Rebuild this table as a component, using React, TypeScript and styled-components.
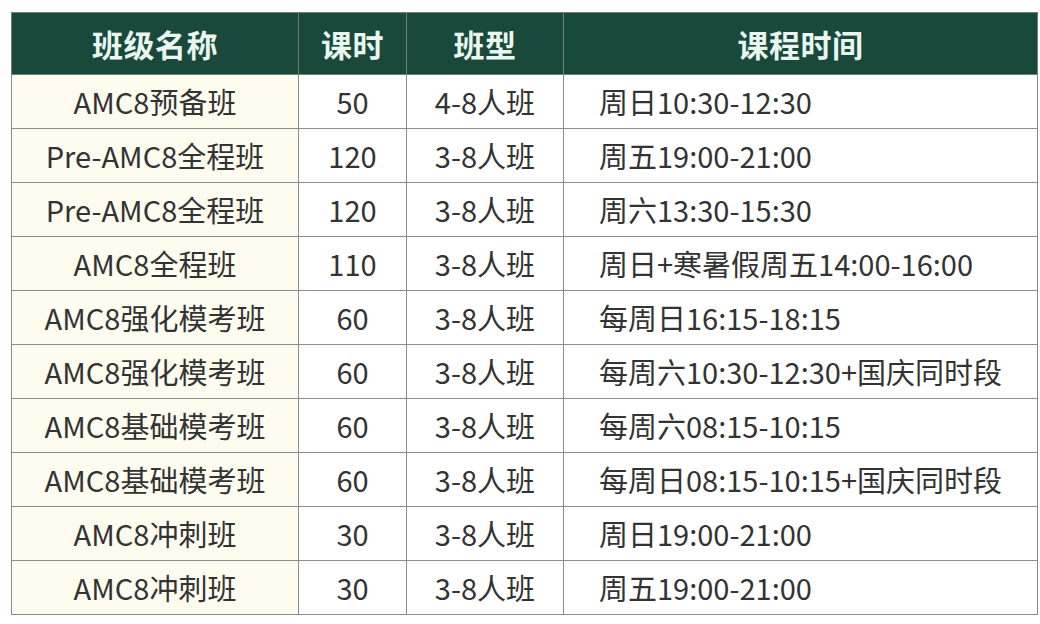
import styled, { createGlobalStyle } from 'styled-components'
import { FC } from 'react'

const GlobalStyle = createGlobalStyle`
  html, body {
    margin: 0;
    padding: 0;
    background: #ffffff;
  }
  body {
    font-family: "Noto Sans CJK SC", "Noto Sans", sans-serif;
  }
`

const Page = styled.div`
  padding: 12px 3px 0 11px;
`

const Table = styled.table`
  width: 1026px;
  border-collapse: collapse;
  table-layout: fixed;
  border: 1px solid #8c8c8c;
`

const HeadRow = styled.tr`
  height: 62px;
  background: #18493b;
`

const HeadCell = styled.th<{ $width: number }>`
  width: ${(p) => p.$width}px;
  padding: 0;
  border: 1px solid #6f8079;
  color: #eaf7f1;
  font-size: 31px;
  font-weight: 700;
  text-align: center;
  letter-spacing: 0.5px;
`

const Row = styled.tr`
  height: 54px;
`

const Cell = styled.td<{ $align?: 'left' | 'center'; $cream?: boolean }>`
  padding: ${(p) => (p.$align === 'left' ? '0 0 0 35px' : '0')};
  border: 1px solid #8c8c8c;
  background: ${(p) => (p.$cream ? '#fdfcef' : '#ffffff')};
  color: #333333;
  font-size: 29px;
  text-align: ${(p) => p.$align ?? 'center'};
  white-space: nowrap;
  line-height: 1;
`

type Course = {
  name: string
  hours: number
  size: string
  time: string
}

const courses: Course[] = [
  { name: 'AMC8预备班', hours: 50, size: '4-8人班', time: '周日10:30-12:30' },
  { name: 'Pre-AMC8全程班', hours: 120, size: '3-8人班', time: '周五19:00-21:00' },
  { name: 'Pre-AMC8全程班', hours: 120, size: '3-8人班', time: '周六13:30-15:30' },
  { name: 'AMC8全程班', hours: 110, size: '3-8人班', time: '周日+寒暑假周五14:00-16:00' },
  { name: 'AMC8强化模考班', hours: 60, size: '3-8人班', time: '每周日16:15-18:15' },
  { name: 'AMC8强化模考班', hours: 60, size: '3-8人班', time: '每周六10:30-12:30+国庆同时段' },
  { name: 'AMC8基础模考班', hours: 60, size: '3-8人班', time: '每周六08:15-10:15' },
  { name: 'AMC8基础模考班', hours: 60, size: '3-8人班', time: '每周日08:15-10:15+国庆同时段' },
  { name: 'AMC8冲刺班', hours: 30, size: '3-8人班', time: '周日19:00-21:00' },
  { name: 'AMC8冲刺班', hours: 30, size: '3-8人班', time: '周五19:00-21:00' },
]

const App: FC = () => {
  return (
    <Page>
      <GlobalStyle />
      <Table>
        <thead>
          <HeadRow>
            <HeadCell $width={286}>班级名称</HeadCell>
            <HeadCell $width={107}>课时</HeadCell>
            <HeadCell $width={156}>班型</HeadCell>
            <HeadCell $width={473}>课程时间</HeadCell>
          </HeadRow>
        </thead>
        <tbody>
          {courses.map((course, i) => (
            <Row key={i}>
              <Cell $cream>{course.name}</Cell>
              <Cell>{course.hours}</Cell>
              <Cell>{course.size}</Cell>
              <Cell $align="left">{course.time}</Cell>
            </Row>
          ))}
        </tbody>
      </Table>
    </Page>
  )
}

export default App
